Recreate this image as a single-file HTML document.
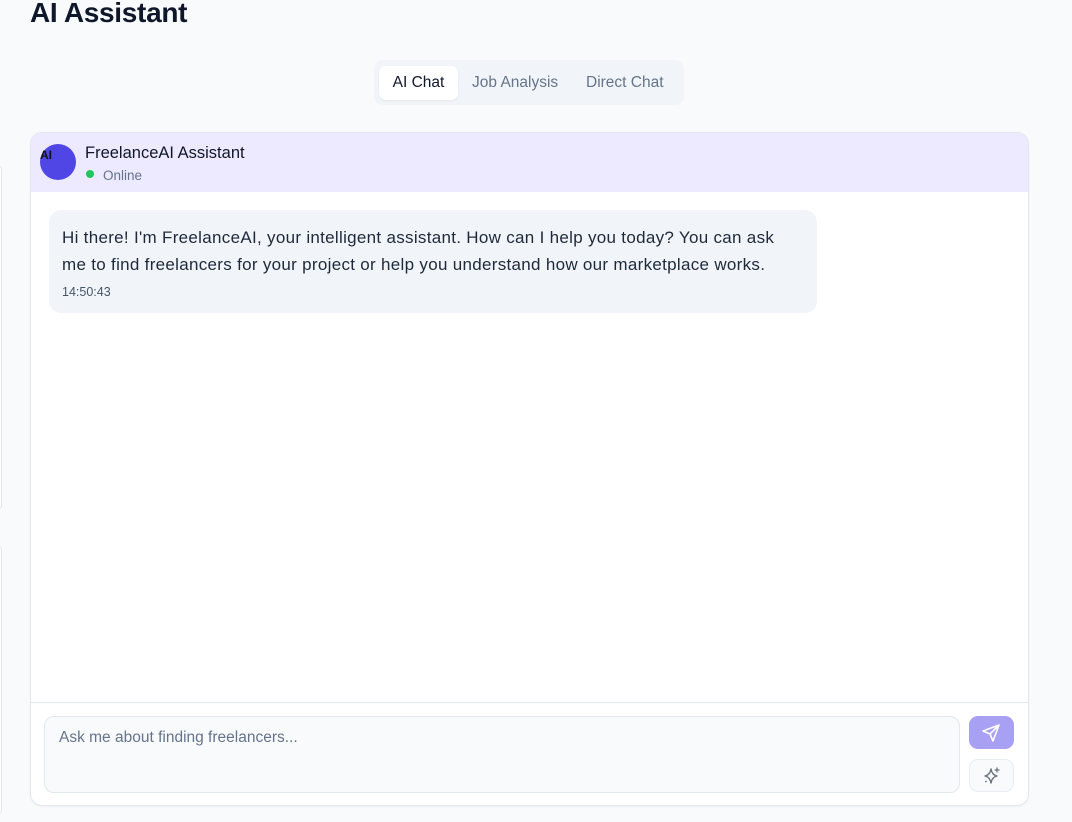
<!DOCTYPE html>
<html><head><meta charset="utf-8"><style>
*{box-sizing:border-box;margin:0;padding:0}
html,body{width:1072px;height:822px;overflow:hidden}
body{background:#f8fafc;font-family:"Liberation Sans",sans-serif;position:relative;color:#0f172a}
h1{position:absolute;left:30px;top:-3px;font-size:28px;font-weight:700;color:#0f172a;letter-spacing:-0.3px}
.tabs{position:absolute;left:374px;top:60px;width:310px;height:45px;background:#f1f5f9;border-radius:9px}
.tab{position:absolute;top:6px;height:34px;line-height:34px;font-size:15.5px;color:#64748b}
.tab.a{background:#fff;color:#0f172a;border-radius:7px;box-shadow:0 1px 2px rgba(0,0,0,.06);left:5px;width:79px;text-align:center}
.edge{position:absolute;left:-8px;width:10px;border:1px solid #e2e8f0;border-radius:6px;background:#fff}
.card{position:absolute;left:30px;top:132px;width:999px;height:674px;background:#fff;border:1px solid #e2e8f0;border-radius:12px;overflow:hidden;box-shadow:0 1px 2px rgba(0,0,0,.04)}
.hdr{height:59px;background:#ede9fe;position:relative}
.av{position:absolute;left:9px;top:11px;width:36px;height:36px;border-radius:50%;background:#4f46e5}
.av span{position:absolute;left:0;top:4px;font-size:12px;font-weight:700;color:#111}
.name{position:absolute;left:54px;top:11px;font-size:16.5px;color:#0f172a}
.dot{position:absolute;left:55px;top:37px;width:8px;height:8px;border-radius:50%;background:#22c55e}
.on{position:absolute;left:72px;top:35px;font-size:13.5px;color:#64748b}
.bub{position:absolute;left:18px;top:77px;width:768px;height:103px;background:#f1f5f9;border-radius:12px;padding:14px 13px}
.bub p{font-size:17px;line-height:27px;color:#1e293b;width:760px;letter-spacing:0.3px;white-space:nowrap}
.bub small{display:block;font-size:12.5px;color:#475569;margin-top:7px}
.div{position:absolute;left:0;top:569px;width:100%;border-top:1px solid #e2e8f0}
.ta{position:absolute;left:13px;top:583px;width:916px;height:77px;border:1px solid #e2e8f0;border-radius:10px;background:#f8fafc;padding:12px 14px;font-size:15.5px;color:#64748b}
.send{position:absolute;left:938px;top:583px;width:45px;height:33px;border-radius:9px;background:#a7a0f3}
.spk{position:absolute;left:938px;top:626px;width:45px;height:33px;border-radius:9px;background:#f8fafc;border:1px solid #e8edf3}
</style></head><body>
<h1>AI Assistant</h1>
<div class="tabs"><div class="tab a">AI Chat</div><div class="tab" style="left:98px">Job Analysis</div><div class="tab" style="left:212px">Direct Chat</div></div>
<div class="edge" style="top:165px;height:345px"></div>
<div class="edge" style="top:545px;height:270px"></div>
<div class="card">
<div class="hdr"><div class="av"><span>AI</span></div><div class="name">FreelanceAI Assistant</div><div class="dot"></div><div class="on">Online</div></div>
<div class="bub"><p>Hi there! I'm FreelanceAI, your intelligent assistant. How can I help you today? You can ask<br>me to find freelancers for your project or help you understand how our marketplace works.</p><small>14:50:43</small></div>
<div class="div"></div>
<div class="ta">Ask me about finding freelancers...</div>
<div class="send"><svg width="45" height="33" viewBox="0 0 45 33"><path d="M30 9 L14 15 L21 18 L24 25 Z M30 9 L21 18" fill="none" stroke="#fff" stroke-width="1.6" stroke-linejoin="round" stroke-linecap="round"/></svg></div>
<div class="spk"><svg width="43" height="31" viewBox="0 0 43 31"><path d="M21 9 Q22 15 27 16 Q22 17 21 23 Q20 17 15 16 Q20 15 21 9Z" fill="none" stroke="#6b7280" stroke-width="1.4" stroke-linejoin="round"/><path d="M27 8v4M25 10h4" stroke="#6b7280" stroke-width="1.3" stroke-linecap="round"/><circle cx="16" cy="21.5" r="0.9" fill="#6b7280"/></svg></div>
</div>
</body></html>
